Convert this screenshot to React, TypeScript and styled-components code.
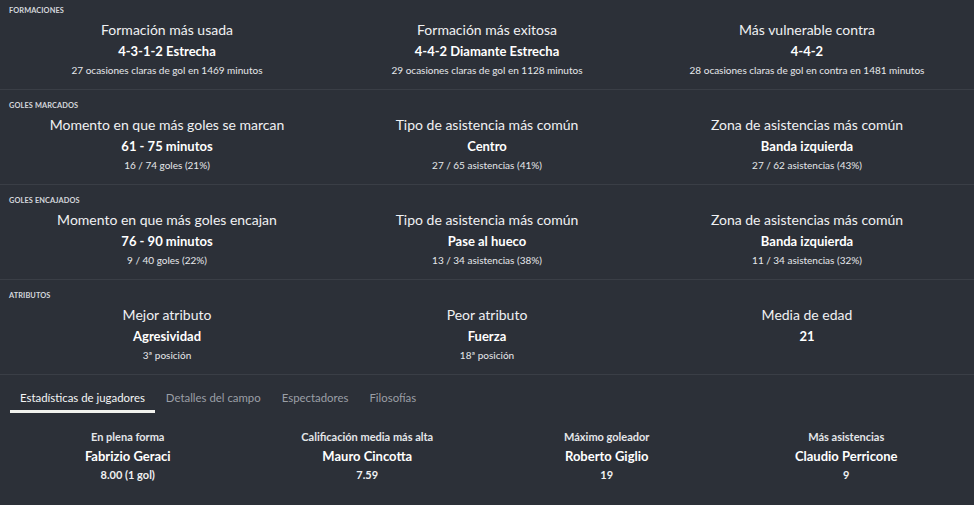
import { FC } from "react";
import styled, { createGlobalStyle } from "styled-components";

const GlobalStyle = createGlobalStyle`
	html, body {
		margin: 0;
		padding: 0;
		background: #2c3038;
	}
	body {
		font-family: Lato, "Open Sans", sans-serif;
		color: #eceef0;
	}
`;

interface IStat {
	title: string;
	value: string;
	detail?: string;
}

interface ISection {
	label: string;
	stats: IStat[];
}

const sections: ISection[] = [
	{
		label: "Formaciones",
		stats: [
			{
				title: "Formación más usada",
				value: "4-3-1-2 Estrecha",
				detail: "27 ocasiones claras de gol en 1469 minutos",
			},
			{
				title: "Formación más exitosa",
				value: "4-4-2 Diamante Estrecha",
				detail: "29 ocasiones claras de gol en 1128 minutos",
			},
			{
				title: "Más vulnerable contra",
				value: "4-4-2",
				detail: "28 ocasiones claras de gol en contra en 1481 minutos",
			},
		],
	},
	{
		label: "Goles marcados",
		stats: [
			{
				title: "Momento en que más goles se marcan",
				value: "61 - 75 minutos",
				detail: "16 / 74 goles (21%)",
			},
			{
				title: "Tipo de asistencia más común",
				value: "Centro",
				detail: "27 / 65 asistencias (41%)",
			},
			{
				title: "Zona de asistencias más común",
				value: "Banda izquierda",
				detail: "27 / 62 asistencias (43%)",
			},
		],
	},
	{
		label: "Goles encajados",
		stats: [
			{
				title: "Momento en que más goles encajan",
				value: "76 - 90 minutos",
				detail: "9 / 40 goles (22%)",
			},
			{
				title: "Tipo de asistencia más común",
				value: "Pase al hueco",
				detail: "13 / 34 asistencias (38%)",
			},
			{
				title: "Zona de asistencias más común",
				value: "Banda izquierda",
				detail: "11 / 34 asistencias (32%)",
			},
		],
	},
	{
		label: "Atributos",
		stats: [
			{ title: "Mejor atributo", value: "Agresividad", detail: "3ª posición" },
			{ title: "Peor atributo", value: "Fuerza", detail: "18ª posición" },
			{ title: "Media de edad", value: "21" },
		],
	},
];

const tabs = [
	"Estadísticas de jugadores",
	"Detalles del campo",
	"Espectadores",
	"Filosofías",
];

const players = [
	{ label: "En plena forma", name: "Fabrizio Geraci", value: "8.00 (1 gol)" },
	{ label: "Calificación media más alta", name: "Mauro Cincotta", value: "7.59" },
	{ label: "Máximo goleador", name: "Roberto Giglio", value: "19" },
	{ label: "Más asistencias", name: "Claudio Perricone", value: "9" },
];

const StatSection: FC<{ section: ISection; first?: boolean }> = ({
	section,
	first,
}) => (
	<Section $first={first}>
		<SectionLabel>{section.label}</SectionLabel>
		<StatGrid>
			{section.stats.map((stat) => (
				<Stat key={stat.title}>
					<StatTitle>{stat.title}</StatTitle>
					<StatValue>{stat.value}</StatValue>
					{stat.detail && <StatDetail>{stat.detail}</StatDetail>}
				</Stat>
			))}
		</StatGrid>
	</Section>
);

export default function App() {
	return (
		<Page>
			<GlobalStyle />
			{sections.map((section, i) => (
				<StatSection key={section.label} section={section} first={i === 0} />
			))}
			<TabBar>
				{tabs.map((tab, i) => (
					<Tab key={tab} $active={i === 0}>
						{tab}
					</Tab>
				))}
			</TabBar>
			<PlayerGrid>
				{players.map((p) => (
					<Player key={p.label}>
						<PlayerLabel>{p.label}</PlayerLabel>
						<PlayerName>{p.name}</PlayerName>
						<PlayerValue>{p.value}</PlayerValue>
					</Player>
				))}
			</PlayerGrid>
		</Page>
	);
}

const Page = styled.div`
	width: 974px;
	height: 505px;
	overflow: hidden;
	background: #2c3038;
`;

const Section = styled.section<{ $first?: boolean }>`
	height: 89px;
	padding-top: ${({ $first }) => ($first ? "0" : "5px")};
	border-bottom: 1px solid #3a3e46;
	box-sizing: content-box;
`;

const SectionLabel = styled.div`
	font-size: 7.4px;
	font-weight: 700;
	text-transform: uppercase;
	color: #d4d7dc;
	letter-spacing: 0.1px;
	padding: 6px 0 0 9px;
	height: 9px;
	line-height: 9px;
`;

const StatGrid = styled.div`
	display: grid;
	grid-template-columns: repeat(3, 1fr);
	padding: 0 7px;
	margin-top: 6px;
`;

const Stat = styled.div`
	display: flex;
	flex-direction: column;
	align-items: center;
	text-align: center;
`;

const StatTitle = styled.div`
	font-size: 14px;
	line-height: 18px;
	color: #f0f1f3;
`;

const StatValue = styled.div`
	font-size: 13px;
	font-weight: 700;
	line-height: 17px;
	margin-top: 4px;
	color: #ffffff;
`;

const StatDetail = styled.div`
	font-size: 10px;
	line-height: 13px;
	margin-top: 4px;
	color: #e6e8eb;
`;

const TabBar = styled.div`
	display: flex;
	padding: 13px 0 0 10px;
	height: 25px;
`;

const Tab = styled.div<{ $active?: boolean }>`
	font-size: 11.4px;
	line-height: 20px;
	padding: 0 10px;
	margin-right: 1px;
	height: 22px;
	color: ${({ $active }) => ($active ? "#f4f5f6" : "#9b9fa6")};
	border-bottom: 3px solid
		${({ $active }) => ($active ? "#f2f2ee" : "transparent")};
`;

const PlayerGrid = styled.div`
	display: grid;
	grid-template-columns: repeat(4, 1fr);
	padding: 17px 8px 0;
`;

const Player = styled.div`
	display: flex;
	flex-direction: column;
	align-items: center;
	text-align: center;
`;

const PlayerLabel = styled.div`
	font-size: 11px;
	font-weight: 700;
	line-height: 14px;
	color: #e4e6e9;
`;

const PlayerName = styled.div`
	font-size: 13px;
	font-weight: 700;
	line-height: 17px;
	margin-top: 4px;
	color: #ffffff;
`;

const PlayerValue = styled.div`
	font-size: 11px;
	font-weight: 700;
	line-height: 14px;
	margin-top: 3px;
	color: #f0f1f3;
`;
